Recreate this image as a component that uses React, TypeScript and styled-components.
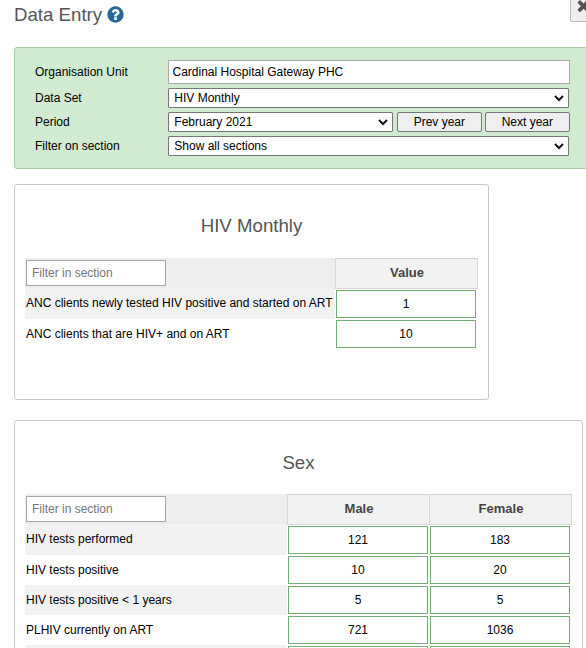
import React from "react";
import styled, { createGlobalStyle } from "styled-components";

const Global = createGlobalStyle`
  html, body { margin: 0; padding: 0; background: #fff; overflow: hidden; }
  body, input, select, button { font-family: "Liberation Sans", Arial, sans-serif; font-size: 12px; color: #000; }
  * { box-sizing: border-box; }
`;

const Page = styled.main`
  width: 586px;
  height: 648px;
  overflow: hidden;
  padding-left: 14px;
`;

const TopBar = styled.header`
  display: flex;
  justify-content: space-between;
  height: 47px;
`;

const Title = styled.h1`
  display: flex;
  align-items: center;
  gap: 4px;
  height: 29px;
  margin: 0;
  font-size: 18.67px;
  font-weight: normal;
  color: #555;
`;

const HelpIcon = styled.svg`
  width: 19px;
  height: 19px;
  fill: #276696;
`;

const CloseButton = styled.button`
  flex: none;
  width: 34px;
  height: 26px;
  margin: -4px -18px 0 0;
  padding: 0 0 0 5px;
  border: 1px solid #bbb;
  border-radius: 2px;
  background: #efefef;
  display: flex;
  align-items: center;
`;

const CloseIcon = styled.svg`
  width: 15px;
  height: 15px;
  margin-top: -8px;
  fill: #555;
`;

const Selection = styled.form`
  display: grid;
  grid-template-columns: 133px 402px;
  grid-template-rows: 24px 20px 20px 20px;
  row-gap: 4px;
  align-items: center;
  width: 600px;
  height: 122px;
  padding: 12px 0 0 20px;
  border: 1px solid #a5d0a5;
  border-radius: 3px;
  background: #d0ebd0;
`;

const Label = styled.label`
  line-height: 14px;
`;

const OrgUnit = styled.input`
  width: 402px;
  height: 24px;
  padding: 0 3.5px;
  border: 1px solid #aaa;
`;

const SelectBox = styled.div<{ $width: number }>`
  position: relative;
  width: ${(p) => p.$width}px;
  height: 20px;
`;

const Select = styled.select`
  appearance: none;
  display: block;
  width: 100%;
  height: 20px;
  margin: 0;
  padding: 0 5.33px;
  border: 1px solid #767676;
  border-radius: 1px;
  background: #fff;
`;

const Chevron = styled.svg`
  position: absolute;
  top: 7px;
  right: 5px;
  width: 10px;
  height: 7px;
  fill: none;
  stroke: #101010;
  stroke-width: 2;
  pointer-events: none;
`;

const PeriodControls = styled.div`
  display: flex;
`;

const YearButton = styled.button`
  width: 85px;
  height: 20px;
  margin-left: 4px;
  padding: 0 0.4px 0 0;
  border: 1px solid #767676;
  border-radius: 2px;
  background: #efefef;

  & + & { margin-left: 3px; }
`;

const Section = styled.section<{ $width: number; $top: number }>`
  width: ${(p) => p.$width}px;
  height: ${(p) => (p.$top > 15 ? 260 : 216)}px;
  margin-top: ${(p) => p.$top}px;
  padding: 0 10px;
  border: 1px solid #c7c7c7;
  border-radius: 3px;
`;

const SectionTitle = styled.h2<{ $inset: number }>`
  height: 73px;
  margin: 0;
  padding-top: ${(p) => p.$inset}px;
  font-size: 18.67px;
  line-height: 22px;
  font-weight: normal;
  text-align: center;
  color: #555;
`;

const HeadRow = styled.div`
  display: flex;
  height: 30px;
`;

const FilterCell = styled.div<{ $width: number }>`
  width: ${(p) => p.$width}px;
  padding: 2px 1px;
  background: #ededed;
`;

const FilterInput = styled.input`
  display: block;
  width: 140px;
  height: 26px;
  padding: 0 5px;
  border: 1px solid #a6a6a6;

  &::placeholder { color: #757575; }
`;

const HeadCell = styled.div`
  width: 143px;
  height: 31px;
  padding-left: 1px;
  border: 1px solid #d6d6d6;
  background: #f2f2f2;
  color: #444;
  font-size: 13px;
  font-weight: bold;
  line-height: 28px;
  text-align: center;

  & + & { margin-left: -1px; }
`;

const DataRow = styled.div`
  display: flex;
  height: 30px;

  &:nth-child(2) { height: 31px; }
`;

const Name = styled.div<{ $width: number; $shaded: boolean }>`
  width: ${(p) => p.$width}px;
  padding-left: 1px;
  line-height: 31px;
  white-space: nowrap;
  background: ${(p) => (p.$shaded ? "#f2f2f2" : "#fff")};
`;

const Entry = styled.input`
  align-self: flex-end;
  width: 140px;
  height: 28px;
  margin: 0 1px 1px;
  padding: 0;
  border: 1px solid #73ad73;
  background: #fff;
  text-align: center;
`;

type SectionData = {
  title: string;
  titleInset: number;
  width: number;
  top: number;
  nameWidth: number;
  columns: string[];
  rows: { name: string; values: string[] }[];
};

const sections: SectionData[] = [
  {
    title: "HIV Monthly",
    titleInset: 30,
    width: 475,
    top: 15,
    nameWidth: 310,
    columns: ["Value"],
    rows: [
      { name: "ANC clients newly tested HIV positive and started on ART", values: ["1"] },
      { name: "ANC clients that are HIV+ and on ART", values: ["10"] },
    ],
  },
  {
    title: "Sex",
    titleInset: 31,
    width: 569,
    top: 20,
    nameWidth: 262,
    columns: ["Male", "Female"],
    rows: [
      { name: "HIV tests performed", values: ["121", "183"] },
      { name: "HIV tests positive", values: ["10", "20"] },
      { name: "HIV tests positive < 1 years", values: ["5", "5"] },
      { name: "PLHIV currently on ART", values: ["721", "1036"] },
      { name: "", values: ["", ""] },
    ],
  },
];

function Dropdown({ width, value }: { width: number; value: string }) {
  return (
    <SelectBox $width={width}>
      <Select>
        <option>{value}</option>
      </Select>
      <Chevron viewBox="0 0 10 7">
        <path d="M1 1l4 4 4-4" />
      </Chevron>
    </SelectBox>
  );
}

function DataSection({ data }: { data: SectionData }) {
  return (
    <Section $width={data.width} $top={data.top}>
      <SectionTitle $inset={data.titleInset}>{data.title}</SectionTitle>
      <div>
        <HeadRow>
          <FilterCell $width={data.nameWidth}>
            <FilterInput placeholder="Filter in section" />
          </FilterCell>
          {data.columns.map((c) => (
            <HeadCell key={c}>{c}</HeadCell>
          ))}
        </HeadRow>
        {data.rows.map((row, i) => (
          <DataRow key={i}>
            <Name $width={data.nameWidth} $shaded={i % 2 === 0}>{row.name}</Name>
            {row.values.map((v, j) => (
              <Entry key={j} defaultValue={v} />
            ))}
          </DataRow>
        ))}
      </div>
    </Section>
  );
}

export default function App() {
  return (
    <>
      <Global />
      <Page>
        <TopBar>
          <Title>
            Data Entry
            <HelpIcon viewBox="0 0 1792 1792">
              <path d="M1024 1376v-192q0-14-9-23t-23-9h-192q-14 0-23 9t-9 23v192q0 14 9 23t23 9h192q14 0 23-9t9-23zm256-672q0-88-55.5-163t-138.5-116-170-41q-243 0-371 213-15 24 8 42l132 100q7 6 19 6 16 0 25-12 53-68 86-92 34-24 86-24 48 0 85.500 26t37.500 59q0 38-20 61t-68 45q-63 28-115.500 86.500t-52.500 125.500v36q0 14 9 23t23 9h192q14 0 23-9t9-23q0-19 21.500-49.500t54.500-49.500q32-18 49-28.500t46-35 44.500-48 28-60.500 12.500-81zm384 192q0 209-103 385.500t-279.500 279.500-385.500 103-385.500-103-279.500-279.500-103-385.500 103-385.500 279.500-279.500 385.500-103 385.500 103 279.500 279.500 103 385.500z" />
            </HelpIcon>
          </Title>
          <CloseButton type="button" aria-label="Close">
            <CloseIcon viewBox="0 128 1408 1536">
              <path d="M1298 1322q0 40-28 68l-136 136q-28 28-68 28t-68-28l-294-294-294 294q-28 28-68 28t-68-28l-136-136q-28-28-28-68t28-68l294-294-294-294q-28-28-28-68t28-68l136-136q28-28 68-28t68 28l294 294 294-294q28-28 68-28t68 28l136 136q28 28 28 68t-28 68l-294 294 294 294q28 28 28 68z" />
            </CloseIcon>
          </CloseButton>
        </TopBar>
        <Selection>
          <Label>Organisation Unit</Label>
          <OrgUnit defaultValue="Cardinal Hospital Gateway PHC" />
          <Label>Data Set</Label>
          <Dropdown width={401} value="HIV Monthly" />
          <Label>Period</Label>
          <PeriodControls>
            <Dropdown width={225} value="February 2021" />
            <YearButton type="button">Prev year</YearButton>
            <YearButton type="button">Next year</YearButton>
          </PeriodControls>
          <Label>Filter on section</Label>
          <Dropdown width={401} value="Show all sections" />
        </Selection>
        {sections.map((s) => (
          <DataSection key={s.title} data={s} />
        ))}
      </Page>
    </>
  );
}
